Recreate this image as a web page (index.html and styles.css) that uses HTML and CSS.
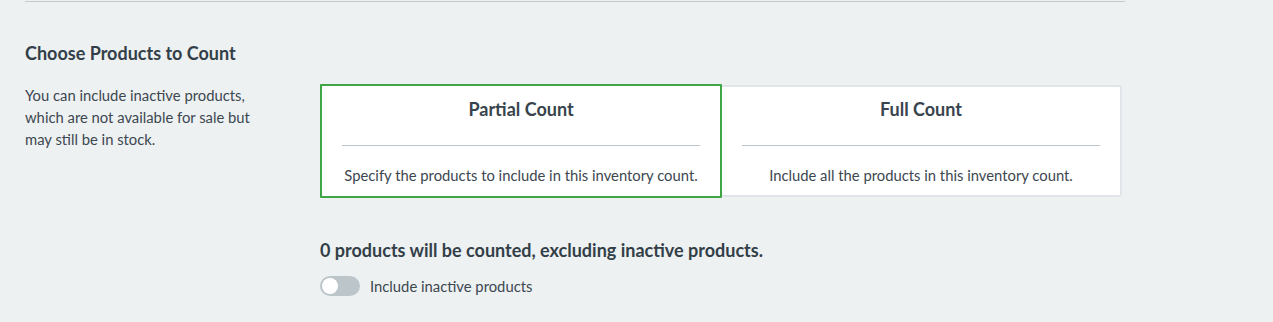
FILE: index.html
```html
<!DOCTYPE html>
<html lang="en">
<head>
  <meta charset="UTF-8">
  <title>Inventory Count</title>
  <meta name="viewport" content="width=device-width, initial-scale=1.0">
  <link rel="stylesheet" href="styles.css">
</head>
<body>

  <div class="section">
    <div class="intro">
      <h2>Choose Products to Count</h2>
      <p>You can include inactive products, which are not available for sale but may still be in stock.</p>
    </div>

    <div class="options">
      <div class="cards">
        <div class="card selected">
          <h3>Partial Count</h3>
          <p>Specify the products to include in this inventory count.</p>
        </div>
        <div class="card">
          <h3>Full Count</h3>
          <p>Include all the products in this inventory count.</p>
        </div>
      </div>

      <p class="summary">0 products will be counted, excluding inactive products.</p>

      <label class="toggle-row">
        <span class="toggle"><span class="knob"></span></span>
        Include inactive products
      </label>
    </div>
  </div>

</body>
</html>
```

FILE: styles.css
```css
body {
  font-family: Lato, 'Open Sans', sans-serif;
  margin: 0;
  padding: 0 0 0 25px;
  background: #eef1f2;
  color: #333f48;
  height: 322px;
  overflow: hidden;
}

.section {
  width: 1100px;
  border-top: 1px solid #c5c9cb;
  margin-top: 1px;
  display: flex;
  padding-top: 40px;
}

.intro {
  width: 295px;
  flex-shrink: 0;
}

.intro h2 {
  font-size: 18px;
  font-weight: 700;
  margin: 0 0 20px;
  line-height: 22px;
}

.intro p {
  font-size: 14.8px;
  line-height: 22px;
  margin: 0;
  width: 240px;
  color: #3c4750;
}

.options {
  padding-top: 42px;
}

.cards {
  display: flex;
}

.card {
  width: 400px;
  height: 112px;
  box-sizing: border-box;
  background: #fff;
  border: 2px solid #e1e5e9;
  border-left-width: 0;
  border-radius: 0 3px 3px 0;
  padding: 0 20px;
  text-align: center;
  margin-top: 1px;
}

.card.selected {
  width: 402px;
  height: 114px;
  margin-top: 0;
  border: 2px solid #3fa646;
  border-radius: 1px;
}

.card h3 {
  font-size: 18px;
  font-weight: 700;
  margin: 0;
  padding: 11px 0 24px;
  line-height: 24px;
  border-bottom: 1px solid #bcc6ca;
  color: #38444d;
}

.card:not(.selected) h3 {
  padding-top: 10px;
}

.card p {
  font-size: 14.8px;
  margin: 0 -20px;
  padding-top: 19px;
  line-height: 20px;
  white-space: nowrap;
  color: #3c4750;
}

.summary {
  font-size: 18px;
  font-weight: 700;
  margin: 40px 0 0;
  line-height: 24px;
}

.toggle-row {
  display: flex;
  align-items: center;
  gap: 10px;
  font-size: 14.8px;
  color: #3c4750;
  margin-top: 14px;
}

.toggle {
  width: 40px;
  height: 20px;
  border-radius: 10px;
  background: #bbc5ca;
  position: relative;
}

.toggle .knob {
  position: absolute;
  left: 2px;
  top: 2px;
  width: 16px;
  height: 16px;
  border-radius: 50%;
  background: #fff;
}
```
